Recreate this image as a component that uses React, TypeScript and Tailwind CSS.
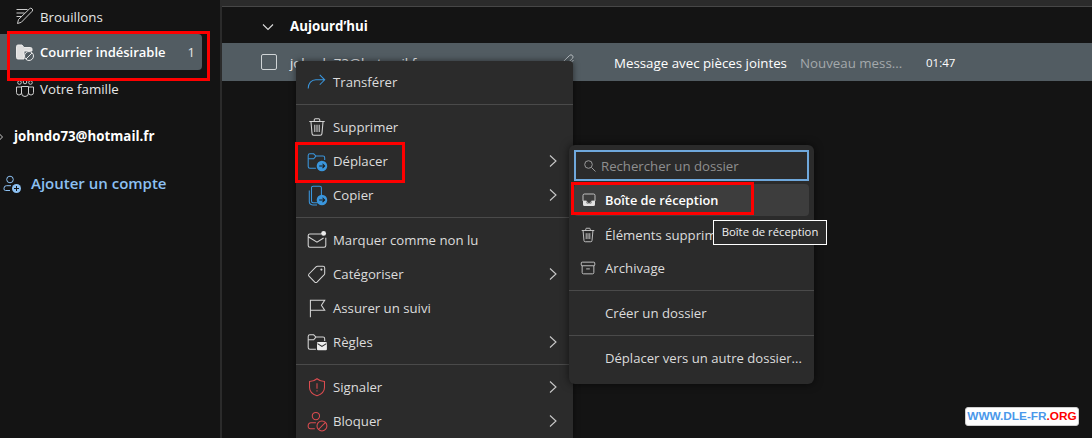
import React from "react";

const F = "[font-family:'Open_Sans','Noto_Sans',sans-serif]";
const Ic = ({ c = "none", s = "#d6d6d6", children, size = 22, cls = "" }: any) => (
  <svg width={size} height={size} viewBox="0 0 20 20" fill={c} stroke={s} strokeWidth="0.95" className={`shrink-0 ${cls}`}>{children}</svg>
);
const Badge = ({ color, children }: any) => (
  <g><circle cx="14.500" cy="14.500" r="4.800" fill={color} stroke="none" />{children}</g>
);
const Arrow = () => <path d="M12 14.500h5M15 12.500l2 2-2 2" stroke="#1b1b1b" fill="none" />;
const Folder = ({ s }: any) => <path d="M2 15V5a1.500 1.500 0 0 1 1.500-1.500H7L9 5.500h6.500A1.500 1.500 0 0 1 17 7v2M2 15a1.500 1.500 0 0 0 1.500 1.500H9" stroke={s} fill="none" />;
const Chevron = () => (
  <svg width="10" height="14" viewBox="0 0 10 14" fill="none" stroke="#c8c8c8" strokeWidth="1.100" className="shrink-0"><path d="M2 1.500 8 7l-6 5.500" /></svg>
);

const trash = (size: number) => (
  <Ic size={size}><path d="M3 5h14M7.500 5V3.500a1 1 0 0 1 1-1h3a1 1 0 0 1 1 1V5M4.500 5l1 11a1.500 1.500 0 0 0 1.500 1.500h6a1.500 1.500 0 0 0 1.500-1.500l1-11M8 8v6.500M10 8v6.500M12 8v6.500" /></Ic>
);

const icons: Record<string, React.ReactNode> = {
  forward: <Ic s="#3a96dd"><path d="M2 16c0-5 3-8 7-8h8M12.500 3.500 17 8l-4.500 4.500" /></Ic>,
  trash: trash(22),
  move: <Ic s="#3a96dd"><Folder s="#3a96dd" /><path d="M2 8h5l2-2.500" /><Badge color="#3a96dd"><Arrow /></Badge></Ic>,
  copy: <Ic s="#3a96dd"><rect x="5" y="2" width="9" height="15" rx="1.500" /><path d="M3 6v10a3 3 0 0 0 3 3h4" /><Badge color="#3a96dd"><Arrow /></Badge></Ic>,
  unread: <Ic><path d="M14 4.500H3.500A1.500 1.500 0 0 0 2 6v9a1.500 1.500 0 0 0 1.500 1.500h13A1.500 1.500 0 0 0 18 15V8M2 7l8 5 6-3.800" /><circle cx="16" cy="4" r="2.200" fill="#ececec" stroke="none" /></Ic>,
  tag: <Ic><path d="M10.500 3h5A1.500 1.500 0 0 1 17 4.500v5a2 2 0 0 1-.6 1.400L10 17.300a1.500 1.500 0 0 1-2 0L2.700 12a1.500 1.500 0 0 1 0-2L9.100 3.600A2 2 0 0 1 10.500 3Z" /><circle cx="14" cy="6" r="1" fill="#d6d6d6" stroke="none" /></Ic>,
  flag: <Ic><path d="M4 18.500V3h13l-3 4.500L17 12H4" /></Ic>,
  rules: <Ic><Folder s="#d6d6d6" /><path d="M2 8h5l2-2.500" /><rect x="10" y="10" width="9" height="7.500" rx="1" fill="#ececec" stroke="none" /><path d="m10.500 11.500 4 2.500 4-2.500" stroke="#2b2b2b" /></Ic>,
  shield: <Ic s="#dc4c50"><path d="M10 2.500c2 1.700 4.200 2.500 6.800 2.500v5.500c0 3.500-2.300 6-6.800 7.500-4.500-1.500-6.800-4-6.800-7.500V5c2.600 0 4.800-.8 6.800-2.500Z" /><path d="M10 6.500v5M10 13v1.200" /></Ic>,
  block: <Ic s="#dc4c50"><circle cx="9" cy="5.500" r="3.300" /><path d="M8 17H4a2 2 0 0 1-2-2v-.8A2.500 2.500 0 0 1 4.500 11.500H9" /><circle cx="14.500" cy="14.500" r="4.500" /><path d="m11.500 17.500 6-6" /></Ic>,
};

const Divider = () => <div className="my-[5px] h-px bg-[#4a4a4a]" />;
const Item = ({ icon, label, sub }: any) => (
  <div className="flex h-[34px] items-center pl-[10px] pr-[15px] text-[#dcdcdc]">
    <span className="mr-[5px] flex w-[22px] justify-center">{icons[icon]}</span>
    <span className="flex-1 pt-[2px] text-[13.200px]">{label}</span>
    {sub && <Chevron />}
  </div>
);

const RedBox = ({ cls }: any) => <div className={`pointer-events-none absolute border-[3px] border-[#fe0000] ${cls}`} />;

const SideRow = ({ icon, label, cls = "" }: any) => (
  <div className={`flex h-[34px] items-center pl-[15px] text-[13.300px] text-[#e6e6e6] ${cls}`}>
    <span className="mr-[5px] flex w-[20px]">{icon}</span><span className="pt-[2px]">{label}</span>
  </div>
);

export default function App() {
  return (
    <div className={`relative flex h-[438px] w-[1092px] overflow-hidden bg-[#141414] ${F}`}>
      {/* Sidebar */}
      <aside className="flex w-[220px] shrink-0 flex-col">
        <SideRow label="Brouillons" icon={
          <Ic size={20}><path d="M1.500 2.500h11M1.500 6h8M1.500 9.500h5" /><path d="m2.500 16.500 1-4L14.500 1.800a1.800 1.800 0 0 1 2.600 2.500L6.300 15.300l-3.800 1.200Z" /></Ic>
        } />
        <div className="flex h-[36px] w-[202px] items-center rounded-r-[4px] bg-[#525c62] pl-[15px] pr-[7px] text-[13px] font-semibold text-white">
          <span className="mr-[5px] flex w-[20px]">
            <Ic size={20} s="#eeeeee"><path d="M1.500 15.500V4.500A1.500 1.500 0 0 1 3 3h4l2 2.500h6.500A1.500 1.500 0 0 1 17 7v2H9v8H3a1.500 1.500 0 0 1-1.500-1.500Z" fill="#dedede" /><circle cx="14" cy="14" r="4.500" fill="#525c62" /><path d="m11 17 6-6" /></Ic>
          </span>
          <span className="flex-1 pt-[2px]">Courrier indésirable</span>
          <span className="pt-[1px] font-normal text-[#e6e6e6]">1</span>
        </div>
        <SideRow cls="mt-[2px]" label="Votre famille" icon={
          <Ic size={20}><circle cx="4.500" cy="3.500" r="1.800" /><circle cx="10" cy="3" r="1.800" /><circle cx="15.500" cy="3.500" r="1.800" /><path d="M1.500 8h5v5.500a2.500 2.500 0 0 1-5 0ZM13.500 8h5v5.500a2.500 2.500 0 0 1-5 0ZM6.500 7.500h7V14a3.500 3.500 0 0 1-7 0Z" /></Ic>
        } />
        <div className="mt-[13px] flex h-[34px] items-center whitespace-nowrap pt-[2px] text-[13.300px] font-bold text-white">
          <svg width="14" height="10" viewBox="0 0 14 10" fill="none" stroke="#c8c8c8" className="shrink-0"><path d="m-1 1.500 3.500 3.500L-1 8.500" /></svg>
          johndo73@hotmail.fr
        </div>
        <div className="mt-[14px] flex h-[34px] items-center pl-[2px] text-[15px] font-semibold text-[#8cc0f2]">
          <span className="mr-[9px] flex">
            <svg width="20" height="20" viewBox="0 0 20 20" fill="none" stroke="#8cc0f2"><circle cx="8" cy="5.500" r="3.300" /><path d="M8 16.500H3.500A1.500 1.500 0 0 1 2 15v-.8A2.500 2.500 0 0 1 4.500 11.700H9" /><circle cx="14.500" cy="14.500" r="4.500" fill="#8cc0f2" stroke="none" /><path d="M14.500 12v5M12 14.500h5" stroke="#141414" /></svg>
          </span>
          <span className="-mt-[2px]">Ajouter un compte</span>
        </div>
      </aside>
      <div className="w-[2px] shrink-0 bg-[#2b2b2b]" />

      {/* Main */}
      <main className="flex min-w-0 flex-1 flex-col">
        <div className="h-[7px] border-b border-[#474747] bg-[#2b2b2b]" />
        <div className="flex h-[36px] items-center pl-[40px] pt-[4px]">
          <svg width="12" height="8" viewBox="0 0 12 8" fill="none" stroke="#dcdcdc" strokeWidth="1.100" className="mr-[16px]"><path d="m1 1.500 5 5 5-5" /></svg>
          <span className="text-[13.300px] font-bold text-white">Aujourd’hui</span>
        </div>
        <div className="flex h-[38px] items-center bg-[#525c62] pl-[39px] text-[13.300px]">
          <span className="h-[16px] w-[16px] rounded-[2px] border border-[#d0d4d6]" />
          <span className="ml-[13px] w-[270px] pt-[4px] text-[#f2f2f2]">johndo73@hotmail.fr</span>
          <span className="w-[54px]">
            <svg width="16" height="16" viewBox="0 0 16 16" fill="none" stroke="#b8bec2" className="-mt-[2px]"><path d="M13.500 7 7.500 13a3 3 0 0 1-4.300-4.300L9.500 2.500a2 2 0 0 1 2.900 2.900L6.500 11.300" /></svg>
          </span>
          <span className="w-[186px] whitespace-nowrap pt-[4px] text-white">Message avec pièces jointes</span>
          <span className="w-[126px] pt-[4px] text-[#a4a9ac]">Nouveau mess...</span>
          <span className="pt-[1px] text-[11.500px] font-medium text-white">01:47</span>
        </div>
      </main>

      {/* Sidebar highlight box */}
      <RedBox cls="left-[7px] top-[31px] h-[50px] w-[203px]" />

      {/* Context menu */}
      <div className="absolute left-[296px] top-[61px] w-[277px] rounded-t-[4px] bg-[#2b2b2b] pt-[4px] shadow-[0_0_6px_rgba(0,0,0,0.5)]">
        <Item icon="forward" label="Transférer" />
        <Divider />
        <Item icon="trash" label="Supprimer" />
        <Item icon="move" label="Déplacer" sub />
        <Item icon="copy" label="Copier" sub />
        <Divider />
        <Item icon="unread" label="Marquer comme non lu" />
        <Item icon="tag" label="Catégoriser" sub />
        <Item icon="flag" label="Assurer un suivi" />
        <Item icon="rules" label="Règles" sub />
        <Divider />
        <Item icon="shield" label="Signaler" sub />
        <Item icon="block" label="Bloquer" sub />
      </div>
      <RedBox cls="left-[295px] top-[142px] h-[41px] w-[110px]" />

      {/* Submenu */}
      <div className="absolute left-[569px] top-[145px] w-[245px] rounded-[6px] bg-[#2b2b2b] px-[5px] pt-[5px] pb-[9px] text-[#dcdcdc] shadow-[0_0_8px_rgba(0,0,0,0.6)]">
        <div className="flex h-[31px] w-[235px] items-center border-2 border-[#6fa8dc] pl-[7px] text-[13.200px] text-[#8f8f8f]">
          <svg width="14" height="14" viewBox="0 0 14 14" fill="none" stroke="#9a9a9a" className="mr-[4px]"><circle cx="5.500" cy="5.500" r="3.800" /><path d="m8.500 8.500 4 4" /></svg>
          <span className="pt-[2px]">Rechercher un dossier</span>
        </div>
        <div className="mt-[3px] flex h-[32px] items-center rounded-[4px] bg-[#3d3d3d] pl-[7px] text-[12.800px] font-semibold text-white">
          <svg width="16" height="16" viewBox="0 0 16 16" className="mr-[8px]"><path d="M3.500 2h9A1.500 1.500 0 0 1 14 3.500V9h-3.500a2.500 2.500 0 0 1-5 0H2V3.500A1.500 1.500 0 0 1 3.500 2Z" fill="#3d3d3d" stroke="#e2e2e2" strokeWidth="0.800" /><path d="M2 9h3a3 3 0 0 0 6 0h3v3.500a1.500 1.500 0 0 1-1.500 1.500h-9A1.500 1.500 0 0 1 2 12.500Z" fill="#e2e2e2" /></svg>
          <span className="pt-[2px]">Boîte de réception</span>
        </div>
        <div className="flex h-[35px] items-center pl-[5px] pt-[3px] text-[13.200px]">
          <span className="mr-[5px] flex w-[21px]">{trash(18)}</span><span className="pt-[2px]">Éléments supprimés</span>
        </div>
        <div className="flex h-[34px] items-center pl-[5px] text-[13.200px]">
          <span className="mr-[5px] flex w-[21px]">
            <Ic size={18}><rect x="2.500" y="3.500" width="15" height="4" rx="1" /><path d="M3.500 7.500V15a1.500 1.500 0 0 0 1.500 1.500h10a1.500 1.500 0 0 0 1.500-1.500V7.500M8 11h4" /></Ic>
          </span><span className="pt-[2px]">Archivage</span>
        </div>
        <div className="-mx-[5px] my-[5px] h-px bg-[#4a4a4a]" />
        <div className="flex h-[34px] items-center pl-[31px] pt-[2px] text-[13.200px]">Créer un dossier</div>
        <div className="-mx-[5px] my-[5px] h-px bg-[#4a4a4a]" />
        <div className="flex h-[34px] items-center whitespace-nowrap pl-[31px] pt-[2px] text-[13.100px]">Déplacer vers un autre dossier...</div>
      </div>
      <RedBox cls="left-[571px] top-[182px] h-[33px] w-[183px]" />

      {/* Tooltip */}
      <div className="absolute left-[713px] top-[220px] flex h-[25px] w-[114px] items-center justify-center whitespace-nowrap border border-white bg-[#2b2b2b] text-[11.300px] text-[#f0f0f0]">
        Boîte de réception
      </div>

      {/* Watermark */}
      <div className="absolute left-[965px] top-[407px] flex h-[19px] w-[114px] items-center justify-center whitespace-nowrap rounded-[3px] border border-[#cfcfcf] bg-white text-[11.800px] font-bold [font-family:'Liberation_Sans',sans-serif]">
        <span className="text-[#4a98ea]">WWW.DLE-FR</span><span className="text-[#fe0000]">.ORG</span>
      </div>
    </div>
  );
}
